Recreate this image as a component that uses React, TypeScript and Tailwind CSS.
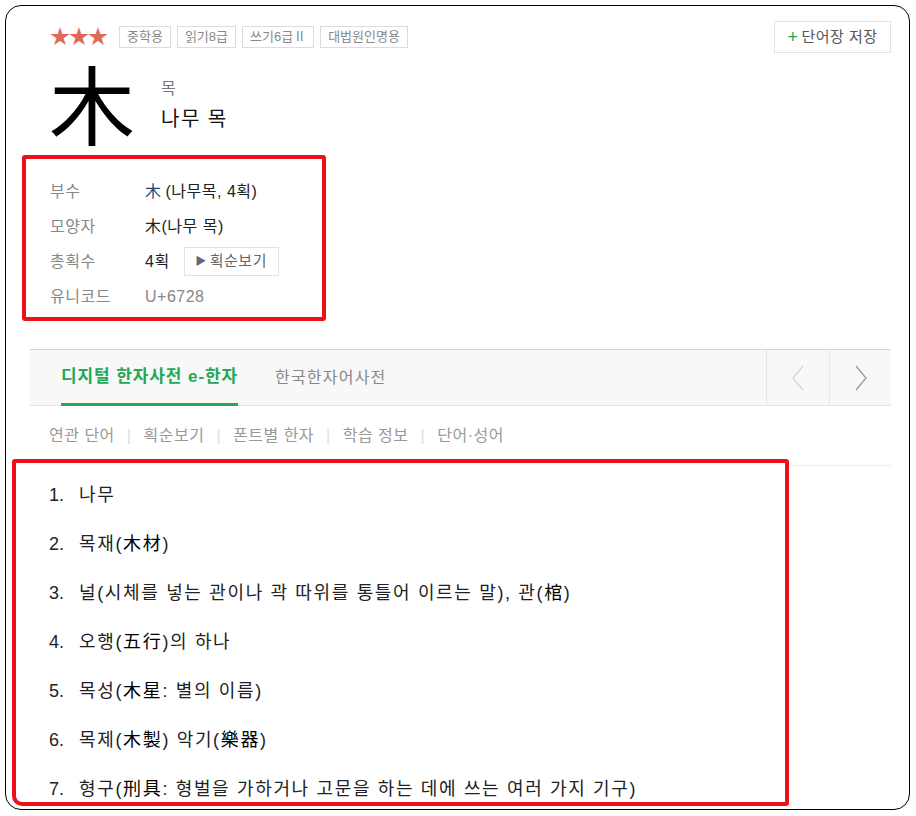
import React from 'react';

const tags = ['중학용', '읽기8급', '쓰기6급Ⅱ', '대법원인명용'];

const meanings: React.ReactNode[] = [
    <>나무</>,
    <>목재(<span className="text-black">木材</span>)</>,
    <>널(시체를 넣는 관이나 곽 따위를 통틀어 이르는 말), 관(<span className="text-black">棺</span>)</>,
    <>오행(<span className="text-black">五行</span>)의 하나</>,
    <>목성(<span className="text-black">木星</span>: 별의 이름)</>,
    <>목제(<span className="text-black">木製</span>) 악기(<span className="text-black">樂器</span>)</>,
    <>형구(<span className="text-black">刑具</span>: 형벌을 가하거나 고문을 하는 데에 쓰는 여러 가지 기구)</>,
];

const subLinks = ['연관 단어', '획순보기', '폰트별 한자', '학습 정보', '단어·성어'];

function InfoRow({label, children}: {label: string; children: React.ReactNode}) {
    return (
        <div className="flex items-center h-[35px]">
            <div className="w-[95px] text-[#888] shrink-0">{label}</div>
            <div className="flex items-center text-[#222]">{children}</div>
        </div>
    );
}

function Chevron({dir, color}: {dir: 'left' | 'right'; color: string}) {
    return (
        <svg width="14" height="26" viewBox="0 0 14 26" fill="none">
            <polyline
                points={dir === 'left' ? '12,1 2,13 12,25' : '2,1 12,13 2,25'}
                stroke={color}
                strokeWidth="1.3"
            />
        </svg>
    );
}

export default function App() {
    return (
        <div
            className="w-[916px] h-[816px] bg-white pl-[5px] pt-[5px] pr-[6px] pb-[6px]"
            style={{fontFamily: '"Liberation Sans", "Noto Sans CJK KR", sans-serif'}}
        >
            <div className="h-full border border-black rounded-[16px] pl-[24px] pr-[18px] overflow-hidden">

                {/* header */}
                <div className="pl-[20px] pt-[15px]">
                    <div className="flex items-center justify-between h-[32px]">
                        <div className="flex items-center gap-[6px]">
                            <span className="text-[20px] leading-none text-[#e06a5a] mr-[6px] tracking-[-1px]">★★★</span>
                            {tags.map((t) => (
                                <span key={t} className="h-[22px] flex items-center border border-[#dcdcdc] px-[7px] text-[13px] text-[#888]">
                                    {t}
                                </span>
                            ))}
                        </div>
                        <button className="h-[32px] w-[117px] flex items-center justify-center gap-[3px] border border-[#e3e3e3] text-[15px] text-[#555] tracking-[0.5px]">
                            <span className="text-[#2aa84f] text-[18px] leading-none">+</span>
                            단어장 저장
                        </button>
                    </div>

                    <div className="flex items-start h-[102px]">
                        <div className="text-[86px] leading-none text-black mt-[13px] w-[112px] -ml-[1px]">木</div>
                        <div className="flex flex-col mt-[24px]">
                            <span className="text-[16px] text-[#777] leading-[24px]">목</span>
                            <span className="text-[20px] text-[#111] leading-[36px] tracking-[1.5px]">나무 목</span>
                        </div>
                    </div>
                </div>

                {/* info box */}
                <div className="-ml-[8px] w-[304px] h-[166px] border-[4px] border-[#ec1018] rounded-[3px] pl-[24px] pt-[15px] text-[16px] tracking-[0.5px]">
                    <InfoRow label="부수">
                        <span className="text-[#26497c]">木</span>
                        <span className="ml-[4px]">(나무목, 4획)</span>
                    </InfoRow>
                    <InfoRow label="모양자">木(나무 목)</InfoRow>
                    <InfoRow label="총획수">
                        4획
                        <span className="ml-[14px] h-[29px] w-[95px] flex items-center justify-center gap-[3px] border border-[#e2e2e2] text-[#666] text-[15px]">
                            <span className="text-[#5d6a82] text-[11px]">▶</span>획순보기
                        </span>
                    </InfoRow>
                    <InfoRow label="유니코드">
                        <span className="text-[#888]">U+6728</span>
                    </InfoRow>
                </div>

                {/* tab bar */}
                <div className="mt-[28px] h-[57px] flex items-stretch bg-[#f8f8f8] border-t border-[#d4d4d4] border-b border-b-[#e6e6e6]">
                    <div className="ml-[31px] flex items-center border-b-[3px] border-[#22a857] -mb-[1px] text-[17px] font-bold text-[#22a857] tracking-[0.9px]">
                        디지털 한자사전 e-한자
                    </div>
                    <div className="ml-[37px] flex items-center text-[16px] text-[#888] tracking-[1.2px]">한국한자어사전</div>
                    <div className="ml-auto flex">
                        <div className="w-[63px] flex items-center justify-center border-l border-[#e6e6e6]">
                            <Chevron dir="left" color="#d4d4d4" />
                        </div>
                        <div className="w-[62px] flex items-center justify-center border-l border-[#e6e6e6]">
                            <Chevron dir="right" color="#999" />
                        </div>
                    </div>
                </div>

                {/* sub links */}
                <div className="h-[60px] flex items-center pl-[19px] border-b border-[#ececec] text-[16px] text-[#999] tracking-[0.5px]">
                    {subLinks.map((l, i) => (
                        <React.Fragment key={l}>
                            {i > 0 && <span className="mx-[12px] text-[#ddd]">|</span>}
                            <span>{l}</span>
                        </React.Fragment>
                    ))}
                </div>

                {/* meanings */}
                <div className="relative -mt-[7px] -ml-[18px] w-[777px] h-[347px] border-[4px] border-[#ec1018] rounded-[3px] rounded-bl-[10px] bg-white pl-[33px] pt-[8px] text-[18px] text-[#222] tracking-[1.65px]">
                    {meanings.map((m, i) => (
                        <div key={i} className="flex items-center h-[49px]">
                            <span className="w-[30px] shrink-0 tracking-normal">{i + 1}.</span>
                            <span>{m}</span>
                        </div>
                    ))}
                </div>
            </div>
        </div>
    );
}
